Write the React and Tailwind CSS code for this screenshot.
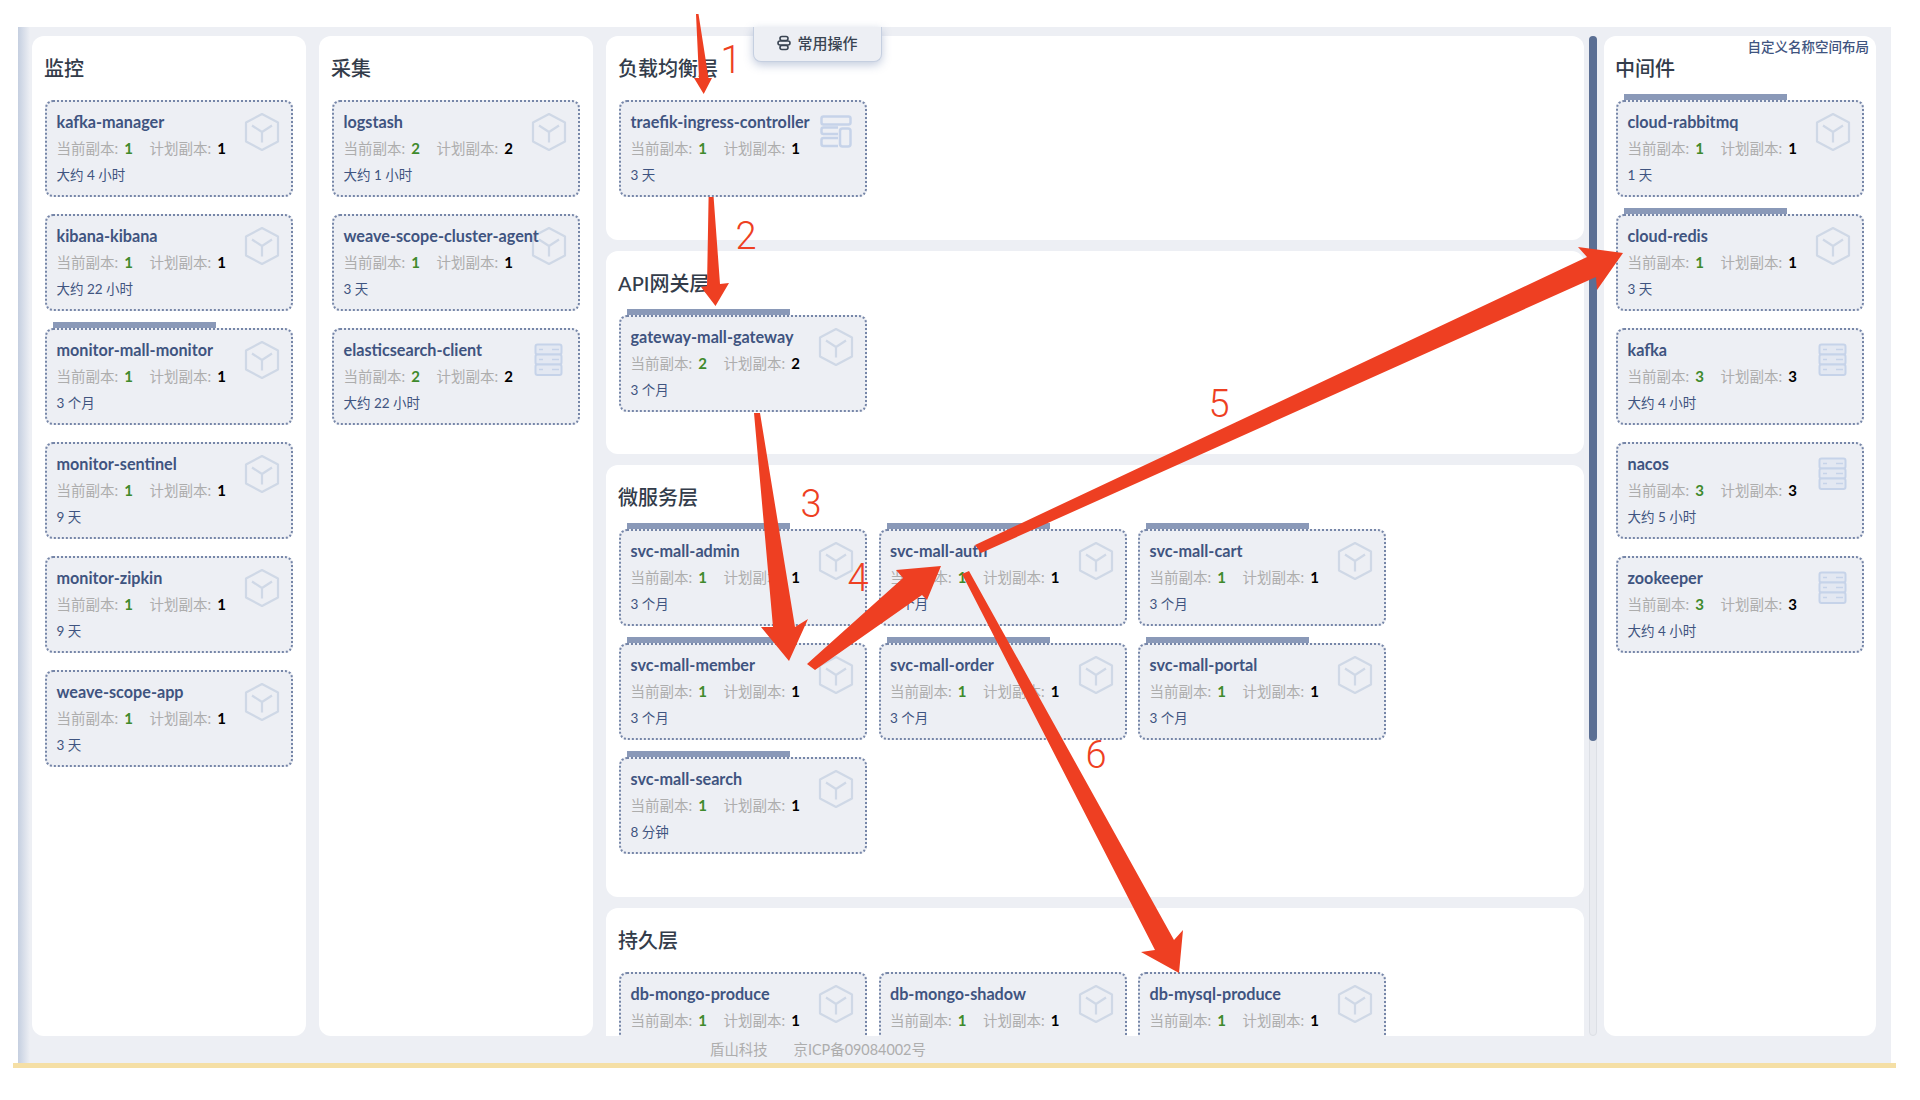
import React from 'react';

const monitor = [
  { name: 'kafka-manager', cur: 1, plan: 1, age: '大约 4 小时' },
  { name: 'kibana-kibana', cur: 1, plan: 1, age: '大约 22 小时' },
  { name: 'monitor-mall-monitor', cur: 1, plan: 1, age: '3 个月', bar: true },
  { name: 'monitor-sentinel', cur: 1, plan: 1, age: '9 天' },
  { name: 'monitor-zipkin', cur: 1, plan: 1, age: '9 天' },
  { name: 'weave-scope-app', cur: 1, plan: 1, age: '3 天' },
];

const collect = [
  { name: 'logstash', cur: 2, plan: 2, age: '大约 1 小时' },
  { name: 'weave-scope-cluster-agent', cur: 1, plan: 1, age: '3 天' },
  { name: 'elasticsearch-client', cur: 2, plan: 2, age: '大约 22 小时', icon: 'server' },
];

const middleware = [
  { name: 'cloud-rabbitmq', cur: 1, plan: 1, age: '1 天', bar: true },
  { name: 'cloud-redis', cur: 1, plan: 1, age: '3 天', bar: true },
  { name: 'kafka', cur: 3, plan: 3, age: '大约 4 小时', icon: 'server' },
  { name: 'nacos', cur: 3, plan: 3, age: '大约 5 小时', icon: 'server' },
  { name: 'zookeeper', cur: 3, plan: 3, age: '大约 4 小时', icon: 'server' },
];

const layers = [
  {
    title: '负载均衡层',
    height: 'h-[204px]',
    items: [{ name: 'traefik-ingress-controller', cur: 1, plan: 1, age: '3 天', icon: 'daemon' }],
  },
  {
    title: 'API网关层',
    height: 'h-[203px]',
    items: [{ name: 'gateway-mall-gateway', cur: 2, plan: 2, age: '3 个月', bar: true }],
  },
  {
    title: '微服务层',
    height: 'h-[432px]',
    items: [
      { name: 'svc-mall-admin', cur: 1, plan: 1, age: '3 个月', bar: true },
      { name: 'svc-mall-auth', cur: 1, plan: 1, age: '3 个月', bar: true },
      { name: 'svc-mall-cart', cur: 1, plan: 1, age: '3 个月', bar: true },
      { name: 'svc-mall-member', cur: 1, plan: 1, age: '3 个月', bar: true },
      { name: 'svc-mall-order', cur: 1, plan: 1, age: '3 个月', bar: true },
      { name: 'svc-mall-portal', cur: 1, plan: 1, age: '3 个月', bar: true },
      { name: 'svc-mall-search', cur: 1, plan: 1, age: '8 分钟', bar: true },
    ],
  },
  {
    title: '持久层',
    height: 'h-[204px]',
    items: [
      { name: 'db-mongo-produce', cur: 1, plan: 1, age: '3 个月' },
      { name: 'db-mongo-shadow', cur: 1, plan: 1, age: '3 个月' },
      { name: 'db-mysql-produce', cur: 1, plan: 1, age: '3 个月' },
    ],
  },
];

function CubeIcon() {
  return (
    <svg className="absolute left-[197px] top-[10px]" width="36" height="40" viewBox="0 0 36 40" fill="none" stroke="#cfd8e6" strokeWidth="2.2" strokeLinejoin="round">
      <path d="M18 2 34 10.5V29.5L18 38 2 29.5V10.5Z" />
      <path d="M8 13.5 18 20 28 13.5M18 20V30.5" />
    </svg>
  );
}

function ServerIcon() {
  return (
    <svg className="absolute left-[200px] top-[13px]" width="29" height="34" viewBox="0 0 29 34" fill="#e3e8f2" stroke="#c6d3e9" strokeWidth="2">
      <rect x="1.5" y="1.5" width="26" height="10" rx="2" />
      <rect x="1.5" y="11.5" width="26" height="10" rx="2" />
      <rect x="1.5" y="21.5" width="26" height="10.5" rx="2" />
      <path d="M5 6.5h4M18 6.5h7M5 16.5h4M18 16.5h7M5 26.5h4M18 26.5h7" strokeWidth="1.5" />
    </svg>
  );
}

function DaemonIcon() {
  return (
    <svg className="absolute left-[199px] top-[13px]" width="32" height="34" viewBox="0 0 32 34" fill="none" stroke="#c6d3e9" strokeWidth="2.5">
      <rect x="1.5" y="1.5" width="29" height="8" rx="2" />
      <path d="M18 12.5H3.5a2 2 0 0 0-2 2V17a2 2 0 0 0 2 2H18" />
      <path d="M18 23H3.5a2 2 0 0 0-2 2v4a2 2 0 0 0 2 2H18" />
      <rect x="20" y="13.5" width="10.5" height="18" rx="2.5" />
    </svg>
  );
}

function Card({ item }) {
  return (
    <div className="relative w-[248px] h-[97px] shrink-0 rounded-lg border-2 border-dotted border-[#7686a8] bg-[#edeff4] pl-[9.5px] pt-[9px]">
      {item.bar && <div className="absolute left-[6px] top-[-8px] w-[163px] h-[6px] bg-[#8a99b8]" />}
      {item.icon === 'server' ? <ServerIcon /> : item.icon === 'daemon' ? <DaemonIcon /> : <CubeIcon />}
      <div className="relative mb-[2px] h-[22px] text-[16.2px] leading-[22px] font-bold text-[#3f5480] whitespace-nowrap">{item.name}</div>
      <div className="flex h-[27px] items-center text-[14.5px] text-[#adadad] whitespace-nowrap">
        <span className="w-[93px]">
          当前副本:<span className="ml-[6px] text-[15px] font-bold text-[#3f8a2c]">{item.cur}</span>
        </span>
        <span>
          计划副本:<span className="ml-[6px] text-[15px] font-bold text-black">{item.plan}</span>
        </span>
      </div>
      <div className="mt-px h-[25px] text-[13.5px] leading-[25px] text-[#3f5480] whitespace-nowrap">{item.age}</div>
    </div>
  );
}

function Title({ children }) {
  return <h2 className="-ml-px flex h-16 items-center text-[20px] font-medium text-[#333c4a]">{children}</h2>;
}

function Annotations() {
  const red = '#ee3f22';
  const labels = [
    ['1', 731, 73, 38],
    ['2', 746, 249, 38],
    ['3', 811, 517, 38],
    ['4', 858, 591, 38],
    ['5', 1219, 417, 38],
    ['6', 1096, 768, 38],
  ];
  return (
    <svg className="absolute left-0 top-0 pointer-events-none" width="1920" height="1100" viewBox="0 0 1920 1100" fill={red}>
      <polygon points="696,14 698.5,14 708.5,78 712,78 703.7,94 694,78 699,78" />
      <polygon points="708.6,197 713.6,197 720,284 729,283 715.5,306 701,287 707,286" />
      <polygon points="754,413 760,413 795,627 808,619 789,661 761,627 773,627" />
      <polygon points="807,664 815,670 922,595 927,600 941,566 896,570 903,578" />
      <polygon points="975,545 981,553 1596,277 1597,290 1623,253 1578,247 1587,257" />
      <polygon points="962,574 969,571 1174,940 1183,930 1179,973 1141,952 1155,950" />
      {labels.map(([t, x, y, size]) => (
        <text key={t} x={x} y={y} textAnchor="middle" fontFamily="Roboto, sans-serif" fontWeight="300" fontSize={size}>
          {t}
        </text>
      ))}
    </svg>
  );
}

export default function App() {
  return (
    <div className="relative w-[1920px] h-[1100px] overflow-hidden bg-white pt-[27px] font-['Lato','Noto_Sans_CJK_SC',sans-serif]">
      <div className="relative ml-[18px] w-[1873px] h-[1036px] bg-[#edeff4]">
        <div className="absolute left-0 top-0 h-full w-3 bg-gradient-to-r from-[#c5cfe0] to-[#edeff4]" />

        <div className="relative flex h-full">
          <div className="flex h-[1009px] pt-[9px] pl-[14px] gap-[13px]">
            <section className="w-[274px] rounded-xl bg-white px-[13px]">
              <Title>监控</Title>
              <div className="flex flex-col gap-[17px]">
                {monitor.map((item) => <Card key={item.name} item={item} />)}
              </div>
            </section>
            <section className="w-[274px] rounded-xl bg-white px-[13px]">
              <Title>采集</Title>
              <div className="flex flex-col gap-[17px]">
                {collect.map((item) => <Card key={item.name} item={item} />)}
              </div>
            </section>
            <div className="flex w-[978px] flex-col gap-[11px] overflow-hidden">
              {layers.map((layer) => (
                <section key={layer.title} className={`${layer.height} shrink-0 rounded-xl bg-white px-[13px]`}>
                  <Title>{layer.title}</Title>
                  <div className="flex flex-wrap gap-x-[11.5px] gap-y-[17px]">
                    {layer.items.map((item) => <Card key={item.name} item={item} />)}
                  </div>
                </section>
              ))}
            </div>
          </div>

          <div className="ml-[5px] mt-[9px] h-[1000px] w-2 rounded-full border border-[#dcdfe5] bg-[#e9ebf0]">
            <div className="-mx-px -mt-px h-[705px] rounded-full bg-[#5b6f94]" />
          </div>

          <section className="relative ml-[7px] mt-[9px] h-[1000px] w-[272px] rounded-xl bg-white pl-[12px]">
            <Title>中间件</Title>
            <div className="flex flex-col gap-[17px]">
              {middleware.map((item) => <Card key={item.name} item={item} />)}
            </div>
            <a className="absolute right-[7px] top-[1px] text-[13.5px] leading-[20px] font-medium text-[#3f5480]">自定义名称空间布局</a>
          </section>
        </div>

        <div className="absolute left-[735px] top-0 flex h-[35px] w-[129px] items-center justify-center gap-[6px] rounded-b-lg border border-t-0 border-[#c5cfe0] bg-[#edeff4] pb-[2px] text-[15px] font-medium text-[#3a4452] shadow-[0_3px_10px_rgba(120,140,180,0.45)]">
          <svg width="14" height="16" viewBox="0 0 14 16" fill="none" stroke="#3a4452" strokeWidth="1.6">
            <rect x="3" y="1.5" width="8" height="4" rx="2" />
            <rect x="1" y="6" width="12" height="4" rx="2" />
            <rect x="3" y="10.5" width="8" height="4" rx="2" />
          </svg>
          常用操作
        </div>

        <div className="absolute left-[692px] bottom-0 flex h-[27px] items-center gap-[26px] text-[14.4px] text-[#adadad]">
          <span>盾山科技</span>
          <span>京ICP备09084002号</span>
        </div>
      </div>
      <div className="ml-[13px] h-[5px] w-[1883px] bg-[#f5dfa5]" />
      <Annotations />
    </div>
  );
}
